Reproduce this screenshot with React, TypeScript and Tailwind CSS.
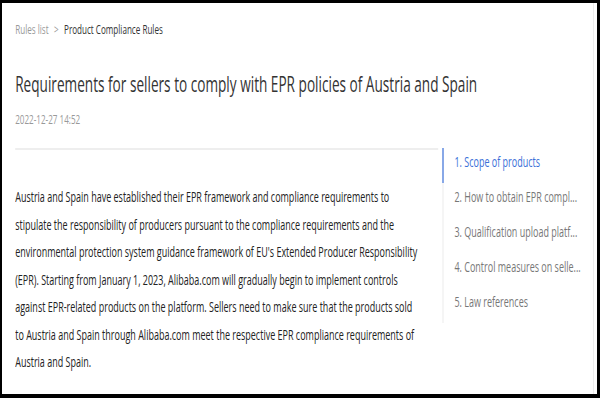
const lines = [
	"Austria and Spain have established their EPR framework and compliance requirements to",
	"stipulate the responsibility of producers pursuant to the compliance requirements and the",
	"environmental protection system guidance framework of EU's Extended Producer Responsibility",
	"(EPR). Starting from January 1, 2023, Alibaba.com will gradually begin to implement controls",
	"against EPR-related products on the platform. Sellers need to make sure that the products sold",
	"to Austria and Spain through Alibaba.com meet the respective EPR compliance requirements of",
	"Austria and Spain.",
];

const nav = [
	"1. Scope of products",
	"2. How to obtain EPR compl...",
	"3. Qualification upload platf...",
	"4. Control measures on selle...",
	"5. Law references",
];

export default function App() {
	return (
		<div className="w-[600px] h-[398px] bg-black pt-[3px] pl-[2px] pr-[3px] pb-[4px] font-['Open_Sans',sans-serif]">
			<div className="bg-white h-full flex">
				<div className="flex-1 mr-[3px] border-r border-[#ececec] overflow-hidden">
					<div className="w-[1000px] origin-top-left scale-x-[0.6] pl-[22px] pt-[17px]">
						<div className="flex items-center gap-[9px] text-[13.5px] leading-[18px]">
							<span className="text-[#999]">Rules list</span>
							<span className="text-[#999]">&gt;</span>
							<span className="text-[#333]">Product Compliance Rules</span>
						</div>

						<h1 className="mt-[31px] text-[22.7px] leading-[30px] text-[#333]">
							Requirements for sellers to comply with EPR policies of Austria and Spain
						</h1>

						<p className="mt-[11px] text-[13.5px] leading-[18px] text-[#999]">2022-12-27 14:52</p>

						<div className="mt-[20px] flex">
							<div className="w-[705px] border-t-2 border-[#eeeeee] pt-[33px]">
								{lines.map((l) => (
									<p key={l} className="whitespace-nowrap text-[15px] leading-[27.5px] text-[#222]">
										{l}
									</p>
								))}
							</div>

							<div className="ml-[7px] flex flex-col">
								{nav.map((n, i) => (
									<div
										key={n}
										className={
											i === 0
												? "h-[35px] border-l-2 border-[#3a6fd8] pl-[18px] pt-[3px] text-[15px] leading-[20px] text-[#3a6fd8] whitespace-nowrap"
												: "h-[35px] border-l-2 border-[#eeeeee] pl-[18px] pt-[3px] text-[15px] leading-[20px] text-[#777] whitespace-nowrap"
										}
									>
										{n}
									</div>
								))}
							</div>
						</div>
					</div>
				</div>
			</div>
		</div>
	);
}
